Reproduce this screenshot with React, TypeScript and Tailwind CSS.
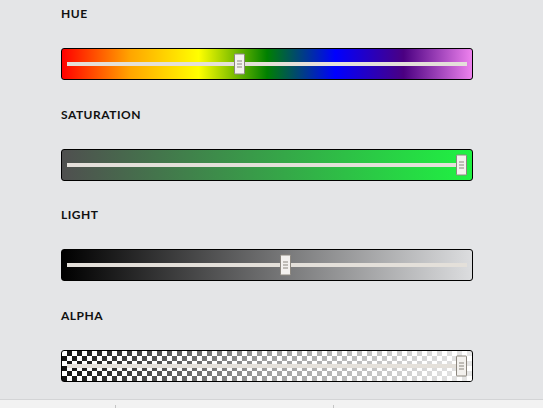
import React from 'react';

type Channel = {
  label: string;
  value: number; // 0..1, thumb position along the track
  kind: 'hue' | 'saturation' | 'light' | 'alpha';
  gap: string;
};

const channels: Channel[] = [
  { label: 'Hue', value: 0.43, kind: 'hue', gap: '' },
  { label: 'Saturation', value: 1, kind: 'saturation', gap: 'mt-[28px]' },
  { label: 'Light', value: 0.547, kind: 'light', gap: 'mt-[27px]' },
  { label: 'Alpha', value: 1, kind: 'alpha', gap: 'mt-[28px]' },
];

const Thumb: React.FC<{ value: number }> = ({ value }) => (
  <div
    className="absolute top-1/2 -translate-y-1/2 w-[11px] h-[21px] bg-[#f3f1ee] border border-[#8c877f] rounded-[1px] flex flex-col items-center justify-center gap-[2px]"
    style={{ left: `calc(${value} * (100% - 11px))` }}
  >
    <span className="block w-[5px] h-px bg-[#8c877f]" />
    <span className="block w-[5px] h-px bg-[#8c877f]" />
    <span className="block w-[5px] h-px bg-[#8c877f]" />
  </div>
);

const Track: React.FC<{ value: number }> = ({ value }) => (
  <div className="relative h-full mx-[5px] flex items-center">
    <div className="w-full h-[4px] bg-[#e4e0da]" />
    <Thumb value={value} />
  </div>
);

const SliderBar: React.FC<{ channel: Channel }> = ({ channel }) => {
  if (channel.kind === 'alpha') {
    return (
      <div className="w-[412px] h-[32px] border border-black rounded-[3px] overflow-hidden bg-white bg-[conic-gradient(#111_25%,#fff_0_50%,#111_0_75%,#fff_0)] bg-[length:10px_10px]">
        <div className="h-full bg-gradient-to-r from-white/0 via-white/60 to-white/90">
          <Track value={channel.value} />
        </div>
      </div>
    );
  }
  const fill =
    channel.kind === 'hue'
      ? 'bg-[linear-gradient(to_right,#ff0000,#ffa500,#ffff00,#008000,#0000ff,#4b0082,#ee82ee)]'
      : channel.kind === 'saturation'
        ? 'bg-[linear-gradient(to_right,#4f4f4f,#1ff242)]'
        : 'bg-[linear-gradient(to_right,#000000,#dcdddf)]';
  return (
    <div className={`w-[412px] h-[32px] border border-black rounded-[3px] overflow-hidden ${fill}`}>
      <Track value={channel.value} />
    </div>
  );
};

export default function App() {
  return (
    <div className="w-[543px] h-[408px] overflow-hidden bg-[#e4e5e7] flex flex-col font-['Lato','Open_Sans',sans-serif]">
      <div className="pl-[61px] pt-[7px] flex flex-col">
        {channels.map(c => (
          <section key={c.label} className={c.gap}>
            <p className="text-[12px] leading-[14px] font-bold uppercase text-[#111] tracking-[0.5px]">{c.label}</p>
            <div className="mt-[27px]">
              <SliderBar channel={c} />
            </div>
          </section>
        ))}
      </div>

      <div className="mt-[17px] flex-1 border-t border-[#d3d4d6] bg-[#f2f2f2] pt-[5px] flex">
        <div className="w-[116px] border-r border-[#c4c4c4]" />
        <div className="w-[218px] border-r border-[#c4c4c4]" />
        <div className="flex-1" />
      </div>
    </div>
  );
}
